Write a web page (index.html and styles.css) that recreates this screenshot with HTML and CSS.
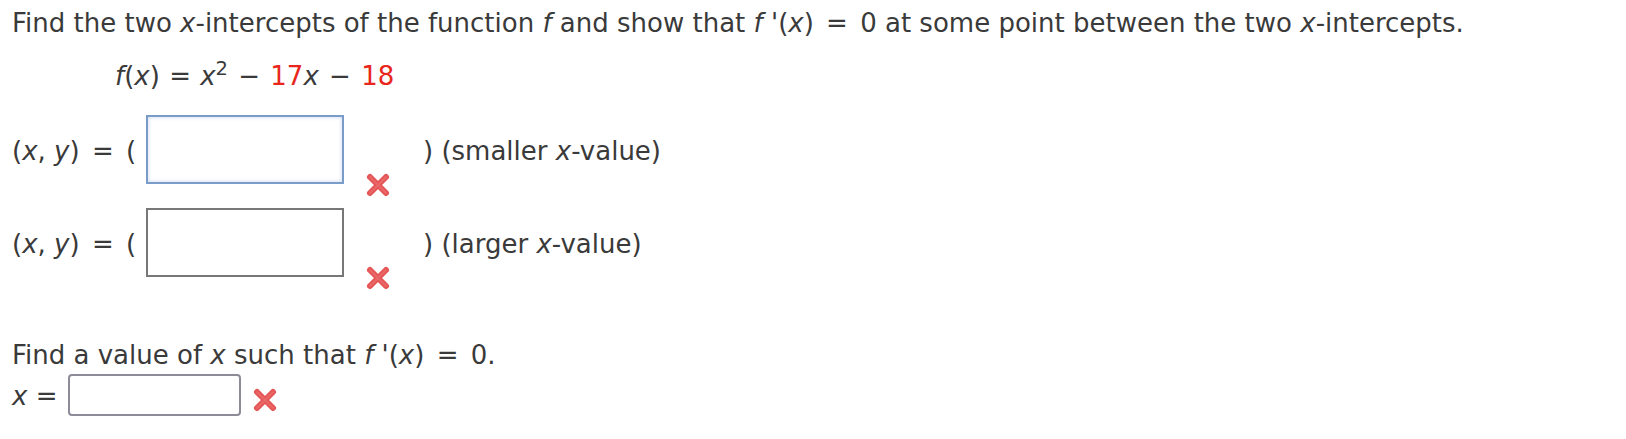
FILE: index.html
```html
<!DOCTYPE html>
<html lang="en">
<head>
  <meta charset="UTF-8">
  <title>x-intercepts</title>
  <link rel="stylesheet" href="styles.css">
</head>
<body>
<main class="problem">
  <p class="questionText">Find the two <i>x</i>-intercepts of the function <i>f</i> and show that <i>f</i> '(<i>x</i>) <span class="eq">=</span> 0 at some point between the two <i>x</i>-intercepts.</p>
  <div class="formula"><i>f</i>(<i>x</i>) <span class="eq">=</span> <i>x</i><sup>2</sup> <span class="op">&minus;</span> <span class="red">17</span><i>x</i> <span class="op">&minus;</span> <span class="red">18</span></div>

  <div class="answerRow">
    <span class="rowLabel">(<i>x</i>, <i>y</i>) <span class="eq">=</span> (</span>
    <div class="answerBox focused"></div>
    <span class="wrongMark"><svg viewBox="0 0 26 26" width="26" height="26"><path d="M5 5 L21 21 M21 5 L5 21" stroke="#e55555" stroke-width="6" stroke-linecap="round"/><path d="M5 5 L21 21 M21 5 L5 21" stroke="#ee7474" stroke-width="2" stroke-linecap="round" opacity="0.6"/></svg></span>
    <span class="rowSuffix">) (smaller <i>x</i>-value)</span>
  </div>

  <div class="answerRow">
    <span class="rowLabel">(<i>x</i>, <i>y</i>) <span class="eq">=</span> (</span>
    <div class="answerBox"></div>
    <span class="wrongMark"><svg viewBox="0 0 26 26" width="26" height="26"><path d="M5 5 L21 21 M21 5 L5 21" stroke="#e55555" stroke-width="6" stroke-linecap="round"/><path d="M5 5 L21 21 M21 5 L5 21" stroke="#ee7474" stroke-width="2" stroke-linecap="round" opacity="0.6"/></svg></span>
    <span class="rowSuffix">) (larger <i>x</i>-value)</span>
  </div>

  <p class="questionText second">Find a value of <i>x</i> such that <i>f</i> '(<i>x</i>) <span class="eq">=</span> 0.</p>
  <div class="xRow">
    <span class="xLabel"><i>x</i> =</span>
    <div class="smallBox"></div>
    <span class="wrongMark"><svg viewBox="0 0 26 26" width="26" height="26"><path d="M5 5 L21 21 M21 5 L5 21" stroke="#e55555" stroke-width="6" stroke-linecap="round"/><path d="M5 5 L21 21 M21 5 L5 21" stroke="#ee7474" stroke-width="2" stroke-linecap="round" opacity="0.6"/></svg></span>
  </div>
</main>
</body>
</html>
```

FILE: styles.css
```css
:root {
  --textColor: #3a3a3a;
  --redColor: #e8261c;
}
body {
  margin: 8px;
  background: #fff;
  color: var(--textColor);
  font-family: "DejaVu Sans", Verdana, sans-serif;
  font-size: 26px;
}
.problem {
  padding-left: 4px;
}
.problem i {
  font-style: italic;
}
.problem .eq {
  padding: 0 4px;
}
.questionText {
  margin: 0;
}
.formula {
  margin-top: 23px;
  padding-left: 103px;
}
.formula .eq {
  padding: 0 1px;
}
.formula sup {
  font-size: 0.75em;
  vertical-align: 0.5em;
  line-height: 0;
}
.formula .op {
  padding: 0 2px;
}
.red {
  color: var(--redColor);
}
.answerRow {
  display: flex;
  align-items: flex-start;
  margin-top: 24px;
}
.answerRow + .answerRow {
  margin-top: 10px;
}
.answerRow .rowLabel {
  width: 134px;
  padding-top: 21px;
}
.answerBox {
  width: 194px;
  height: 65px;
  border: 2px solid #777;
  background: #fff;
}
.answerBox.focused {
  border-color: #7a9cc8;
  box-shadow: inset 0 0 4px #c6d8f0;
}
.answerRow .wrongMark {
  margin: 57px 0 0 21px;
  width: 26px;
  height: 26px;
}
.answerRow .rowSuffix {
  margin-left: 32px;
  padding-top: 21px;
}
.questionText.second {
  margin-top: 49px;
}
.xRow {
  display: flex;
  align-items: flex-start;
  margin-top: 4px;
}
.xLabel {
  width: 56px;
  padding-top: 7px;
}
.smallBox {
  width: 169px;
  height: 38px;
  border: 2px solid #8c8c98;
  border-radius: 4px;
}
.xRow .wrongMark {
  margin: 13px 0 0 11px;
  width: 26px;
  height: 26px;
}
```
